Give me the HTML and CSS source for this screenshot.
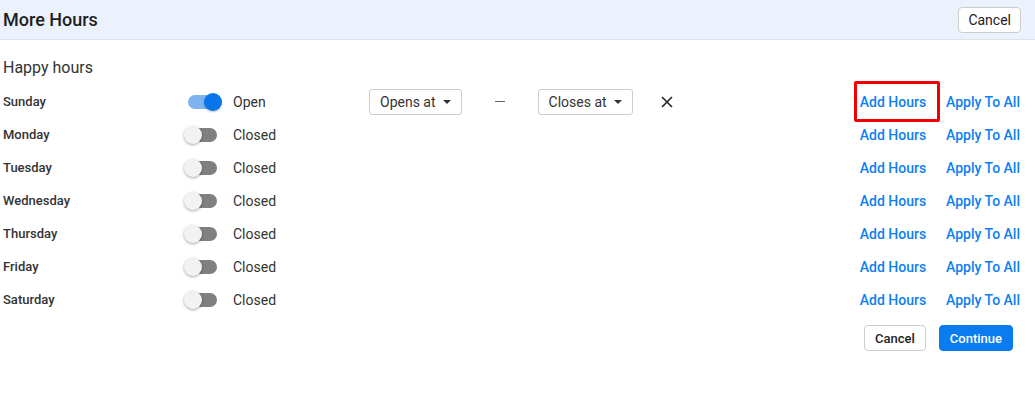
FILE: index.html
```html
<!DOCTYPE html>
<html lang="en">
<head>
    <meta charset="UTF-8">
    <meta name="viewport" content="width=device-width, initial-scale=1.0">
    <title>More Hours</title>
    <link rel="stylesheet" href="styles.css">
</head>
<body>

    <div class="topo">
        <h1>More Hours</h1>
        <button type="button" class="botao leve">Cancel</button>
    </div>

    <div class="conteudo">
        <h2>Happy hours</h2>

        <div class="linha">
            <span class="dia">Sunday</span>
            <span class="chave ligada"><span class="trilho"></span><span class="bolinha"></span></span>
            <span class="estado">Open</span>
            <div class="horarios">
                <button type="button" class="seletor">Opens at <i class="seta"></i></button>
                <span class="traco"><i></i></span>
                <button type="button" class="seletor">Closes at <i class="seta"></i></button>
                <svg class="fechar" width="14" height="14" viewBox="0 0 14 14"><path d="M2 2 L12 12 M12 2 L2 12" stroke="#222" stroke-width="1.6" fill="none"/></svg>
            </div>
            <div class="acoes">
                <a href="#" class="destaque">Add Hours</a>
                <a href="#">Apply To All</a>
            </div>
        </div>

        <div class="linha">
            <span class="dia">Monday</span>
            <span class="chave"><span class="trilho"></span><span class="bolinha"></span></span>
            <span class="estado">Closed</span>
            <div class="acoes"><a href="#">Add Hours</a><a href="#">Apply To All</a></div>
        </div>

        <div class="linha">
            <span class="dia">Tuesday</span>
            <span class="chave"><span class="trilho"></span><span class="bolinha"></span></span>
            <span class="estado">Closed</span>
            <div class="acoes"><a href="#">Add Hours</a><a href="#">Apply To All</a></div>
        </div>

        <div class="linha">
            <span class="dia">Wednesday</span>
            <span class="chave"><span class="trilho"></span><span class="bolinha"></span></span>
            <span class="estado">Closed</span>
            <div class="acoes"><a href="#">Add Hours</a><a href="#">Apply To All</a></div>
        </div>

        <div class="linha">
            <span class="dia">Thursday</span>
            <span class="chave"><span class="trilho"></span><span class="bolinha"></span></span>
            <span class="estado">Closed</span>
            <div class="acoes"><a href="#">Add Hours</a><a href="#">Apply To All</a></div>
        </div>

        <div class="linha">
            <span class="dia">Friday</span>
            <span class="chave"><span class="trilho"></span><span class="bolinha"></span></span>
            <span class="estado">Closed</span>
            <div class="acoes"><a href="#">Add Hours</a><a href="#">Apply To All</a></div>
        </div>

        <div class="linha">
            <span class="dia">Saturday</span>
            <span class="chave"><span class="trilho"></span><span class="bolinha"></span></span>
            <span class="estado">Closed</span>
            <div class="acoes"><a href="#">Add Hours</a><a href="#">Apply To All</a></div>
        </div>

        <div class="rodape">
            <button type="button" class="botao">Cancel</button>
            <button type="button" class="botao primario">Continue</button>
        </div>
    </div>

</body>
</html>
```

FILE: styles.css
```css
body {
    margin: 0;
    font-family: Roboto, "Liberation Sans", Arial, sans-serif;
    color: #222;
    background: #fff;
}

.topo {
    display: flex;
    align-items: center;
    justify-content: space-between;
    height: 39px;
    padding: 0 14px 0 3px;
    background-color: #ebf2fd;
    border-bottom: 1px solid #dde3ea;
}

h1 {
    margin: 0;
    font-size: 18px;
    font-weight: 500;
    color: #1e1e1e;
}

.botao {
    height: 26px;
    padding: 0 10px;
    font-family: inherit;
    font-size: 13px;
    font-weight: 500;
    color: #222;
    background: #fff;
    border: 1px solid #ccc;
    border-radius: 4px;
    cursor: pointer;
}

.leve {
    font-size: 14px;
    font-weight: 400;
    padding: 0 9px;
}

.primario {
    background-color: #0a7cf0;
    border-color: #0a7cf0;
    color: #fff;
}

.conteudo {
    padding: 0 15px 0 3px;
}

h2 {
    margin: 0;
    padding: 18px 0 7px;
    font-size: 16px;
    font-weight: 400;
    line-height: 20px;
    color: #333;
}

.linha {
    display: flex;
    align-items: center;
    height: 33px;
}

.dia {
    width: 181px;
    font-size: 13px;
    font-weight: 500;
    color: #333;
}

.chave {
    position: relative;
    width: 34px;
    height: 20px;
}

.trilho {
    position: absolute;
    left: 4px;
    top: 3px;
    width: 29px;
    height: 14px;
    border-radius: 7px;
    background-color: #808080;
}

.bolinha {
    position: absolute;
    left: 0;
    top: 1px;
    width: 18px;
    height: 18px;
    border-radius: 50%;
    background-color: #f2f2f2;
    box-shadow: 0 1px 3px rgba(0, 0, 0, 0.35);
}

.ligada .trilho {
    background-color: #7fb3f0;
}

.ligada .bolinha {
    left: 20px;
    background-color: #0a76eb;
    box-shadow: 0 1px 2px rgba(0, 0, 0, 0.25);
}

.estado {
    margin-left: 15px;
    width: 136px;
    font-size: 14px;
    color: #333;
}

.horarios {
    display: flex;
    align-items: center;
}

.seletor {
    display: flex;
    align-items: center;
    gap: 7px;
    height: 26px;
    padding: 0 10px;
    font-family: inherit;
    font-size: 14px;
    color: #333;
    background: #fff;
    border: 1px solid #ccc;
    border-radius: 3px;
}

.seta {
    width: 0;
    height: 0;
    border-left: 4px solid transparent;
    border-right: 4px solid transparent;
    border-top: 4px solid #333;
}

.traco {
    display: flex;
    justify-content: center;
    width: 76px;
}

.traco i {
    width: 10px;
    height: 1px;
    background-color: #666;
}

.fechar {
    margin-left: 27px;
}

.acoes {
    display: flex;
    margin-left: auto;
    gap: 20px;
}

.acoes a {
    position: relative;
    font-size: 14px;
    font-weight: 500;
    color: #0d7ff2;
    text-decoration: none;
}

.destaque::after {
    content: "";
    position: absolute;
    left: -6px;
    right: -14px;
    top: -13px;
    bottom: -12px;
    border: 3px solid #f20000;
    border-radius: 2px;
}

.rodape {
    display: flex;
    justify-content: flex-end;
    gap: 13px;
    margin-top: 9px;
    padding-right: 7px;
}
```
